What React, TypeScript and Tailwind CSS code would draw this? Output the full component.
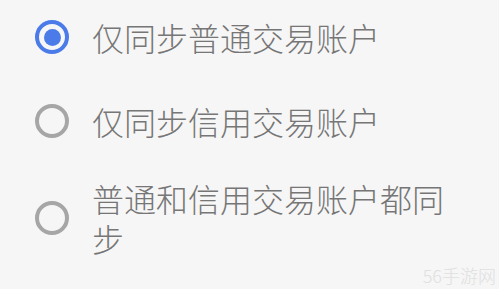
import { useState } from 'react'

const OPTIONS = ['仅同步普通交易账户', '仅同步信用交易账户', '普通和信用交易账户都同步']

export default function App() {
  const [selected, setSelected] = useState(0)

  return (
    <div
      className="relative w-[499px] h-[289px] overflow-hidden bg-[#f6f6f6]"
      style={{ fontFamily: '"Noto Sans CJK SC", "Noto Sans", sans-serif' }}
    >
      <div className="-mt-[5px] flex flex-col">
        {OPTIONS.map((label, i) => (
          <button
            key={label}
            onClick={() => setSelected(i)}
            className="flex items-center min-h-[84px] py-[15px] pl-[35px] pr-[40px] text-left"
          >
            {/* 라디오 */}
            <span
              className={`shrink-0 w-[34px] h-[34px] rounded-full border-[4px] flex items-center justify-center ${
                selected === i ? 'border-[#4a7be8]' : 'border-[#a6a6a6]'
              }`}
            >
              {selected === i && <span className="w-[17px] h-[17px] rounded-full bg-[#4a7be8]" />}
            </span>
            <span className="ml-[23px] max-w-[360px] text-[32px] leading-[40px] font-light text-[#767676]">{label}</span>
          </button>
        ))}
      </div>

      {/* 워터마크 */}
      <div className="absolute right-[3px] bottom-[5px] text-[18px] leading-none font-light text-[#e0e0e0]">56手游网</div>
    </div>
  )
}
